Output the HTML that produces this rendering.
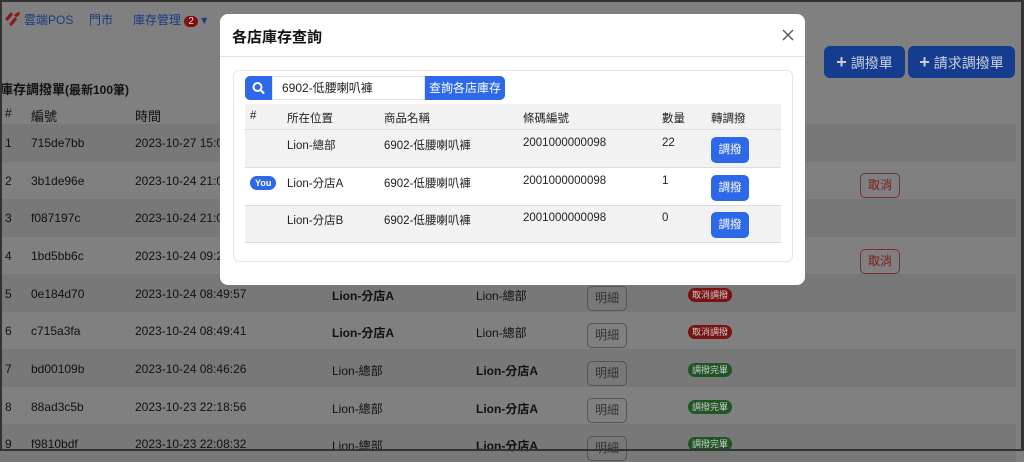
<!DOCTYPE html>
<html><head><meta charset="utf-8"><style>
*{box-sizing:border-box;margin:0;padding:0}
body{width:1024px;height:451px;overflow:hidden;font-family:"Liberation Sans","Noto Sans CJK TC",sans-serif;background:#808080;position:relative;font-size:12px;color:#111}
.frame{position:absolute;inset:0;border:2px solid #333;border-right-width:3px;z-index:50;pointer-events:none}
.abs{position:absolute;white-space:nowrap}
.nav{color:#1a3a80;font-size:12px}
.row{position:absolute;left:0;width:1016px;height:37.5px}
.s{background:#787878}
.c{position:absolute;color:#111;font-size:12px}
.btn-o{position:absolute;border:1px solid #555;border-radius:5px;width:40px;height:25px;font-size:12px;color:#333;text-align:center;line-height:23px}
.badge{position:absolute;border-radius:7px;font-size:9px;color:#ccc;padding:1px 4px;line-height:12px}
.modal{position:absolute;left:220px;top:14px;width:585px;height:271px;background:#fff;border-radius:8px;z-index:10}
.tb{position:absolute;color:#222;font-size:11.5px}
.blue{background:#2c68e8;color:#fff}
</style></head><body>
<div class="frame"></div>
<svg class="abs" style="left:4px;top:10px" width="17" height="17" viewBox="0 0 17 17"><path d="M1 9L7 2L9 4.5L3.5 11Z M5 14L11 7L13 9.5L7.5 16Z M10 5L15 1.5L16 4.5L12 7.5Z" fill="#8a1a1a"/></svg>
<div class="abs nav" style="left:24px;top:11px">雲端POS</div>
<div class="abs nav" style="left:89px;top:11px">門市</div>
<div class="abs nav" style="left:133px;top:11px">庫存管理 <span style="background:#801010;color:#ddd;border-radius:8px;padding:0 4px;font-size:10px">2</span> ▾</div>
<div class="abs" style="left:0;top:79px;font-weight:bold;font-size:13px;color:#111">庫存調撥單<span style="font-size:12px">(最新100筆)</span></div>
<div class="abs" style="left:824px;top:46px;width:81px;height:32px;background:#153c8f;border-radius:6px;color:#ccd;font-size:14px;line-height:32px;text-align:center"><b style="font-size:18px">+</b> 調撥單</div>
<div class="abs" style="left:908px;top:46px;width:107px;height:32px;background:#153c8f;border-radius:6px;color:#ccd;font-size:14px;line-height:32px;text-align:center"><b style="font-size:18px">+</b> 請求調撥單</div>
<div class="c" style="left:5px;top:106px">#</div><div class="c" style="left:31px;top:106px;font-size:13px">編號</div><div class="c" style="left:135px;top:106px;font-size:13px">時間</div>
<div class="row s" style="top:124px"></div>
<div class="row" style="top:161.5px"></div>
<div class="row s" style="top:199px"></div>
<div class="row" style="top:236.5px"></div>
<div class="row s" style="top:274px"></div>
<div class="row" style="top:311.5px"></div>
<div class="row s" style="top:349px"></div>
<div class="row" style="top:386.5px"></div>
<div class="row s" style="top:424px"></div>
<div class="c" style="left:5px;top:136px">1</div><div class="c" style="left:31px;top:136px">715de7bb</div><div class="c" style="left:135px;top:136px">2023-10-27 15:04</div>
<div class="c" style="left:5px;top:174px">2</div><div class="c" style="left:31px;top:174px">3b1de96e</div><div class="c" style="left:135px;top:174px">2023-10-24 21:02</div>
<div class="c" style="left:5px;top:211px">3</div><div class="c" style="left:31px;top:211px">f087197c</div><div class="c" style="left:135px;top:211px">2023-10-24 21:02</div>
<div class="c" style="left:5px;top:249px">4</div><div class="c" style="left:31px;top:249px">1bd5bb6c</div><div class="c" style="left:135px;top:249px">2023-10-24 09:2</div>
<div class="btn-o" style="left:860px;top:173px;border-color:#7a3030;color:#7a1a1a">取消</div>
<div class="btn-o" style="left:860px;top:249px;border-color:#7a3030;color:#7a1a1a">取消</div>
<div class="c" style="left:5px;top:287px">5</div><div class="c" style="left:31px;top:287px">0e184d70</div><div class="c" style="left:135px;top:287px">2023-10-24 08:49:57</div><div class="c" style="left:332px;top:287px;font-weight:bold">Lion-分店A</div><div class="c" style="left:476px;top:287px">Lion-總部</div><div class="btn-o" style="left:587px;top:286px">明細</div><div class="badge" style="left:688px;top:288px;background:#7a1212">取消調撥</div>
<div class="c" style="left:5px;top:324px">6</div><div class="c" style="left:31px;top:324px">c715a3fa</div><div class="c" style="left:135px;top:324px">2023-10-24 08:49:41</div><div class="c" style="left:332px;top:324px;font-weight:bold">Lion-分店A</div><div class="c" style="left:476px;top:324px">Lion-總部</div><div class="btn-o" style="left:587px;top:323px">明細</div><div class="badge" style="left:688px;top:325px;background:#7a1212">取消調撥</div>
<div class="c" style="left:5px;top:362px">7</div><div class="c" style="left:31px;top:362px">bd00109b</div><div class="c" style="left:135px;top:362px">2023-10-24 08:46:26</div><div class="c" style="left:332px;top:362px">Lion-總部</div><div class="c" style="left:476px;top:362px;font-weight:bold">Lion-分店A</div><div class="btn-o" style="left:587px;top:361px">明細</div><div class="badge" style="left:688px;top:363px;background:#1f5424">調撥完畢</div>
<div class="c" style="left:5px;top:400px">8</div><div class="c" style="left:31px;top:400px">88ad3c5b</div><div class="c" style="left:135px;top:400px">2023-10-23 22:18:56</div><div class="c" style="left:332px;top:400px">Lion-總部</div><div class="c" style="left:476px;top:400px;font-weight:bold">Lion-分店A</div><div class="btn-o" style="left:587px;top:398px">明細</div><div class="badge" style="left:688px;top:400px;background:#1f5424">調撥完畢</div>
<div class="c" style="left:5px;top:437px">9</div><div class="c" style="left:31px;top:437px">f9810bdf</div><div class="c" style="left:135px;top:437px">2023-10-23 22:08:32</div><div class="c" style="left:332px;top:437px">Lion-總部</div><div class="c" style="left:476px;top:437px;font-weight:bold">Lion-分店A</div><div class="btn-o" style="left:587px;top:436px">明細</div><div class="badge" style="left:688px;top:437px;background:#1f5424">調撥完畢</div>

<div class="modal">
  <div class="abs" style="left:12px;top:12px;font-size:15px;font-weight:bold;color:#111">各店庫存查詢</div>
  <svg class="abs" style="left:562px;top:15px" width="12" height="12" viewBox="0 0 12 12"><path d="M1 1L11 11M11 1L1 11" stroke="#555" stroke-width="1.4"/></svg>
  <div class="abs" style="left:0;top:42px;width:585px;height:1px;background:#e3e3e3"></div>
  <div class="abs" style="left:13px;top:56px;width:560px;height:192px;border:1px solid #e6e6e6;border-radius:6px"></div>
  <div class="abs blue" style="left:25px;top:62px;width:27px;height:24px;border-radius:5px 0 0 5px">
    <svg width="27" height="24" viewBox="0 0 27 24"><circle cx="12.5" cy="11" r="4" fill="none" stroke="#fff" stroke-width="2"/><path d="M15.5 14L18.5 17" stroke="#fff" stroke-width="2.2" stroke-linecap="round"/></svg>
  </div>
  <div class="abs" style="left:52px;top:62px;width:153px;height:24px;border:1px solid #e3e3e3;font-size:12px;line-height:22px;padding-left:9px;color:#222">6902-低腰喇叭褲</div>
  <div class="abs blue" style="left:205px;top:62px;width:80px;height:24px;border-radius:0 5px 5px 0;font-size:12px;line-height:24px;text-align:center">查詢各店庫存</div>
  <div class="abs" style="left:25px;top:90px;width:536px;height:26px;background:#f2f2f2;border-bottom:1px solid #ddd"></div>
  <div class="abs" style="left:25px;top:116px;width:536px;height:38px;background:#f2f2f2;border-bottom:1px solid #ddd"></div>
  <div class="abs" style="left:25px;top:154px;width:536px;height:38px;border-bottom:1px solid #ddd"></div>
  <div class="abs" style="left:25px;top:192px;width:536px;height:37px;background:#f2f2f2;border-bottom:1px solid #ddd"></div>
  <div class="tb" style="left:30px;top:96px">#</div><div class="tb" style="left:67px;top:96px">所在位置</div><div class="tb" style="left:164px;top:96px">商品名稱</div><div class="tb" style="left:303px;top:96px">條碼編號</div><div class="tb" style="left:442px;top:96px">數量</div><div class="tb" style="left:491px;top:96px">轉調撥</div>
  <div class="tb" style="left:67px;top:123px">Lion-總部</div><div class="tb" style="left:164px;top:123px">6902-低腰喇叭褲</div><div class="tb" style="left:303px;top:123px">2001000000098</div><div class="tb" style="left:442px;top:123px">22</div>
  <div class="abs" style="left:30px;top:162px;background:#2c68e8;color:#fff;font-size:9px;font-weight:bold;border-radius:7px;padding:1px 5px;line-height:12px">You</div>
  <div class="tb" style="left:67px;top:161px">Lion-分店A</div><div class="tb" style="left:164px;top:161px">6902-低腰喇叭褲</div><div class="tb" style="left:303px;top:161px">2001000000098</div><div class="tb" style="left:442px;top:161px">1</div>
  <div class="tb" style="left:67px;top:198px">Lion-分店B</div><div class="tb" style="left:164px;top:198px">6902-低腰喇叭褲</div><div class="tb" style="left:303px;top:198px">2001000000098</div><div class="tb" style="left:442px;top:198px">0</div>
  <div class="abs blue" style="left:491px;top:123px;width:38px;height:26px;border-radius:5px;font-size:11.5px;line-height:26px;text-align:center">調撥</div>
  <div class="abs blue" style="left:491px;top:161px;width:38px;height:26px;border-radius:5px;font-size:11.5px;line-height:26px;text-align:center">調撥</div>
  <div class="abs blue" style="left:491px;top:198px;width:38px;height:26px;border-radius:5px;font-size:11.5px;line-height:26px;text-align:center">調撥</div>
</div>
</body></html>
